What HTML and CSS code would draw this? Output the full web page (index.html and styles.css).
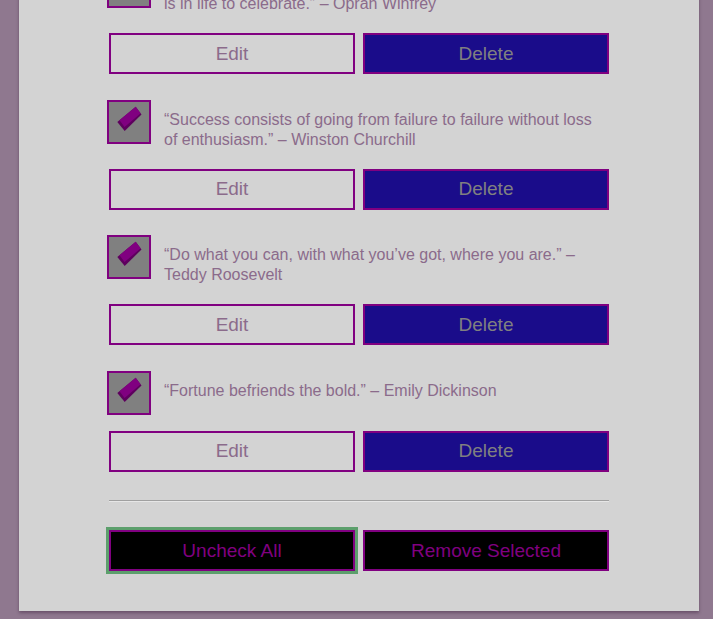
FILE: index.html
```html
<!DOCTYPE html>
<html>
<head>
<meta charset="utf-8">
<link rel="stylesheet" href="styles.css">
</head>
<body>
<div class="card">
  <div class="item first">
    <div class="row">
      <span class="check"><svg viewBox="0 0 40 40" width="40" height="40"><polygon points="8.3,20 26.7,4.7 32.5,12.5 15.7,29" fill="#5e005e"/><polygon points="10.5,18.2 26.7,4.7 31.6,11.3 15.6,25" fill="#800080"/></svg></span>
      <p class="quote">“The more you praise and celebrate your life, the more there is&nbsp;in life to celebrate.” – Oprah Winfrey</p>
    </div>
    <div class="actions"><button class="btn edit">Edit</button><button class="btn delete">Delete</button></div>
  </div>
  <div class="item">
    <div class="row">
      <span class="check"><svg viewBox="0 0 40 40" width="40" height="40"><polygon points="8.3,20 26.7,4.7 32.5,12.5 15.7,29" fill="#5e005e"/><polygon points="10.5,18.2 26.7,4.7 31.6,11.3 15.6,25" fill="#800080"/></svg></span>
      <p class="quote">“Success consists of going from failure to failure without loss of enthusiasm.” – Winston Churchill</p>
    </div>
    <div class="actions"><button class="btn edit">Edit</button><button class="btn delete">Delete</button></div>
  </div>
  <div class="item">
    <div class="row">
      <span class="check"><svg viewBox="0 0 40 40" width="40" height="40"><polygon points="8.3,20 26.7,4.7 32.5,12.5 15.7,29" fill="#5e005e"/><polygon points="10.5,18.2 26.7,4.7 31.6,11.3 15.6,25" fill="#800080"/></svg></span>
      <p class="quote">“Do what you can, with what you’ve got, where you are.” – Teddy Roosevelt</p>
    </div>
    <div class="actions"><button class="btn edit">Edit</button><button class="btn delete">Delete</button></div>
  </div>
  <div class="item">
    <div class="row">
      <span class="check"><svg viewBox="0 0 40 40" width="40" height="40"><polygon points="8.3,20 26.7,4.7 32.5,12.5 15.7,29" fill="#5e005e"/><polygon points="10.5,18.2 26.7,4.7 31.6,11.3 15.6,25" fill="#800080"/></svg></span>
      <p class="quote">“Fortune befriends the bold.” – Emily Dickinson</p>
    </div>
    <div class="actions"><button class="btn edit">Edit</button><button class="btn delete">Delete</button></div>
  </div>
  <hr class="divider">
  <div class="actions bottom"><button class="btn dark focused">Uncheck All</button><button class="btn dark">Remove Selected</button></div>
</div>
</body>
</html>
```

FILE: styles.css
```css
html, body {
  margin: 0;
  padding: 0;
  height: 100%;
  overflow: hidden;
}
body {
  background: #8f788f;
  font-family: "Liberation Sans", Arial, sans-serif;
}
.card {
  width: 680px;
  box-sizing: border-box;
  margin-left: 19px;
  margin-top: -36px;
  background: #d3d3d3;
  padding: 0 90px 40px;
  box-shadow: 0 2px 3px rgba(60, 30, 60, 0.45);
}
.item {
  margin-top: 25.5px;
}
.item.first {
  margin-top: 0;
}
.row {
  display: flex;
  align-items: flex-start;
  gap: 13px;
}
.check {
  flex: none;
  width: 40px;
  height: 40px;
  margin-left: -2px;
  border: 2px solid #800080;
  background: #808080;
  display: block;
}
.check svg {
  display: block;
}
.quote {
  margin: 0;
  padding: 10px 0 3px;
  font-size: 16px;
  line-height: 20px;
  color: #8b6b8b;
}
.actions {
  display: flex;
  gap: 8px;
  margin-top: 16px;
}
.btn {
  flex: 1;
  height: 41px;
  box-sizing: border-box;
  border: 2px solid #800080;
  font-family: "Liberation Sans", Arial, sans-serif;
  font-size: 19px;
  padding: 0;
  margin: 0;
}
.edit {
  background: transparent;
  color: #8b6b8b;
}
.delete {
  background: #1a0c8a;
  color: #808080;
}
.divider {
  margin: 28.5px 0 0;
  border: 0;
  border-top: 1px solid #a0a0a0;
  border-bottom: 1px solid #e6e6e6;
  height: 0;
}
.bottom {
  margin-top: 28px;
}
.dark {
  background: #000;
  color: #800080;
}
.focused {
  outline: 3px solid #5c9f6c;
}
```
